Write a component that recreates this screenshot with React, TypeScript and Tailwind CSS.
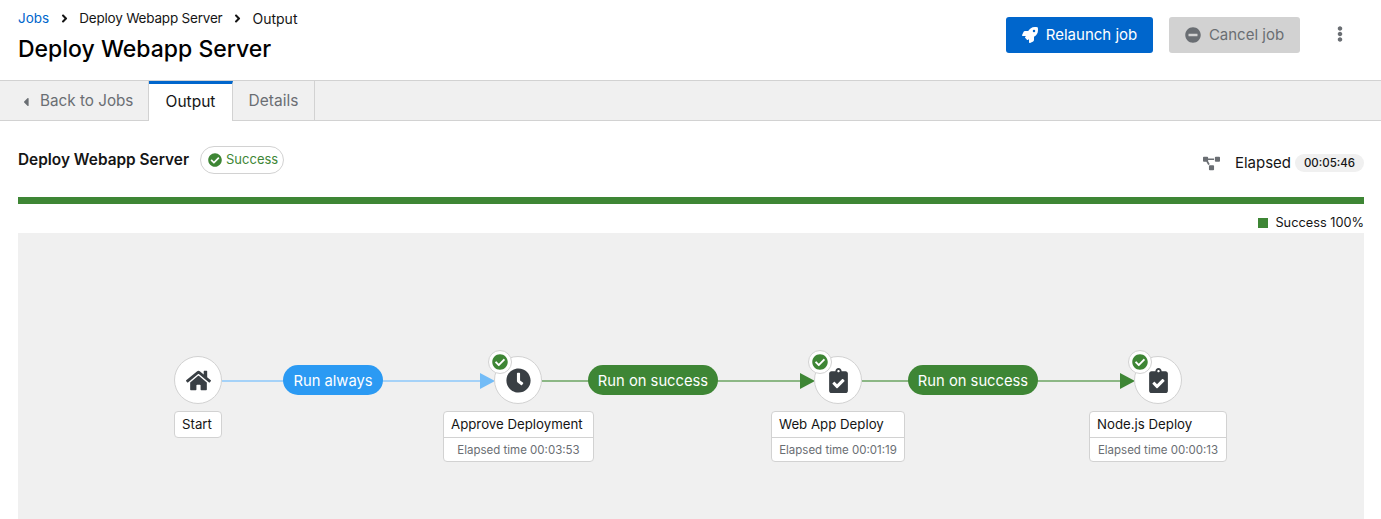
import { FaAngleRight, FaCaretLeft, FaCheckCircle, FaClipboardCheck, FaClock, FaEllipsisV, FaHome, FaMinusCircle, FaProjectDiagram, FaRocket } from 'react-icons/fa'
import type { ReactNode } from 'react'

// ── Workflow graph ────────────────────────────────────────────────────────────

interface GraphNodeProps {
  left: number
  icon: ReactNode
  done?: boolean
}

function GraphNode({ left, icon, done = true }: GraphNodeProps) {
  return (
    <div
      className="absolute top-[123px] flex h-[48px] w-[48px] items-center justify-center rounded-full border border-[#d2d2d2] bg-white text-[#393f44]"
      style={{ left }}
    >
      {icon}
      {done && (
        <span className="absolute -left-[7px] -top-[7px] flex h-[24px] w-[24px] items-center justify-center rounded-full border border-[#d2d2d2] bg-white text-[#3e8635]">
          <FaCheckCircle size={16} />
        </span>
      )}
    </div>
  )
}

interface NodeLabelProps {
  left: number
  width: number
  name: string
  elapsed?: string
}

function NodeLabel({ left, width, name, elapsed }: NodeLabelProps) {
  return (
    <div
      className="absolute top-[178px] rounded-[4px] border border-[#d2d2d2] bg-white"
      style={{ left, width }}
    >
      <div className="flex h-[25px] items-center whitespace-nowrap px-[7px] text-[13.25px] text-[#151515]">{name}</div>
      {elapsed && (
        <div className="flex h-[24px] items-center justify-center whitespace-nowrap border-t border-[#d2d2d2] pt-[2px] text-[11.5px] text-[#6a6e73]">
          Elapsed time {elapsed}
        </div>
      )}
    </div>
  )
}

interface LinkProps {
  left: number
  width: number
  blue?: boolean
}

function Link({ left, width, blue = false }: LinkProps) {
  return (
    <div className="absolute top-[147px] flex h-[2px] items-center" style={{ left, width }}>
      <div className={blue ? 'h-[2px] flex-1 bg-[#a5d2f8]' : 'h-[2px] flex-1 bg-[#8cb785]'} />
      <svg width="15" height="16" viewBox="0 0 15 16" className="shrink-0">
        <path d="M0 0L15 8L0 16Z" fill={blue ? '#73bcf7' : '#3e8635'} />
      </svg>
    </div>
  )
}

interface PillProps {
  left: number
  width: number
  label: string
  blue?: boolean
}

function Pill({ left, width, label, blue = false }: PillProps) {
  return (
    <div
      className={`absolute top-[132px] flex h-[30px] items-center justify-center rounded-full pt-[2px] text-[14.75px] text-white ${blue ? 'bg-[#2b9af3]' : 'bg-[#3e8635]'}`}
      style={{ left, width }}
    >
      {label}
    </div>
  )
}

// ── Page ──────────────────────────────────────────────────────────────────────

export default function App() {
  return (
    <div className="h-[519px] overflow-hidden bg-white font-['Inter',sans-serif] text-[#151515]">
      <header className="flex h-[81px] justify-between border-b border-[#d2d2d2] pl-[18px] pr-[33px]">
        <div>
          <nav className="mt-[10px] flex h-[17px] items-center text-[13.5px]">
            <span className="text-[#0066cc]">Jobs</span>
            <FaAngleRight size={13} className="mx-[8.5px]" />
            <span className="tracking-[-0.2px]">Deploy Webapp Server</span>
            <FaAngleRight size={13} className="mx-[8.5px]" />
            <span className="text-[14px]">Output</span>
          </nav>
          <h1 className="mt-[6px] text-[23px] font-medium leading-[32px] text-[#000]">Deploy Webapp Server</h1>
        </div>
        <div className="flex items-start pt-[17px]">
          <button className="flex h-[36px] w-[147px] items-center justify-center gap-[8px] rounded-[3px] bg-[#0066cc] text-[15px] text-white">
            <FaRocket size={16} />
            Relaunch job
          </button>
          <button className="ml-[16px] flex h-[36px] w-[131px] items-center justify-center gap-[8px] rounded-[3px] bg-[#d2d2d2] text-[15px] text-[#6a6e73]">
            <FaMinusCircle size={16} />
            Cancel job
          </button>
          <span className="ml-[32px] mt-[9px] text-[#6a6e73]">
            <FaEllipsisV size={16} />
          </span>
        </div>
      </header>

      <div className="flex h-[40px] border-b border-[#d2d2d2] bg-[#f0f0f0] text-[15.5px]">
        <div className="flex w-[149px] items-center border-r border-[#d2d2d2] pl-[19px] pt-[2px] text-[15.25px] text-[#6a6e73]">
          <FaCaretLeft size={14} className="mr-[7px]" />
          Back to Jobs
        </div>
        <div className="-mb-px flex h-[40px] w-[84px] items-center justify-center border-r border-t-[3px] border-[#d2d2d2] border-t-[#0066cc] bg-white pb-[1px]">
          Output
        </div>
        <div className="flex w-[82px] items-center justify-center border-r border-[#d2d2d2] text-[#6a6e73]">
          Details
        </div>
      </div>

      <main className="pl-[18px] pr-[17px]">
        <div className="flex h-[76px] items-start justify-between">
          <div className="mt-[25px] flex items-center">
            <span className="text-[15.4px] font-semibold">Deploy Webapp Server</span>
            <span className="ml-[11px] flex h-[28px] items-center gap-[4px] rounded-full border border-[#d2d2d2] pl-[7px] pr-[5px] text-[13px] text-[#3e8635]">
              <FaCheckCircle size={14} />
              Success
            </span>
          </div>
          <div className="mt-[31px] flex items-center">
            <FaProjectDiagram size={17} className="text-[#6a6e73]" />
            <span className="ml-[15px] text-[15px]">Elapsed</span>
            <span className="ml-[4px] flex h-[18px] w-[69px] items-center justify-center rounded-full bg-[#f0f0f0] text-[11.5px] font-medium">
              00:05:46
            </span>
          </div>
        </div>

        <div className="h-[7px] bg-[#3e8635]" />

        <div className="flex h-[29px] items-center justify-end pt-[8px] text-[12.75px]">
          <span className="mr-[7px] h-[10px] w-[10px] bg-[#3e8635]" />
          Success 100%
        </div>

        <div className="relative h-[286px] bg-[#f0f0f0]">
          <Link left={204} width={273} blue />
          <Link left={524} width={273} />
          <Link left={844} width={273} />
          <Pill left={265} width={100} label="Run always" blue />
          <Pill left={570} width={130} label="Run on success" />
          <Pill left={890} width={130} label="Run on success" />
          <GraphNode left={156} done={false} icon={<FaHome size={25} />} />
          <GraphNode left={476} icon={<FaClock size={25} />} />
          <GraphNode left={796} icon={<FaClipboardCheck size={25} />} />
          <GraphNode left={1116} icon={<FaClipboardCheck size={25} />} />
          <NodeLabel left={156} width={48} name="Start" />
          <NodeLabel left={425} width={151} name="Approve Deployment" elapsed="00:03:53" />
          <NodeLabel left={753} width={134} name="Web App Deploy" elapsed="00:01:19" />
          <NodeLabel left={1071} width={138} name="Node.js Deploy" elapsed="00:00:13" />
        </div>
      </main>
    </div>
  )
}
